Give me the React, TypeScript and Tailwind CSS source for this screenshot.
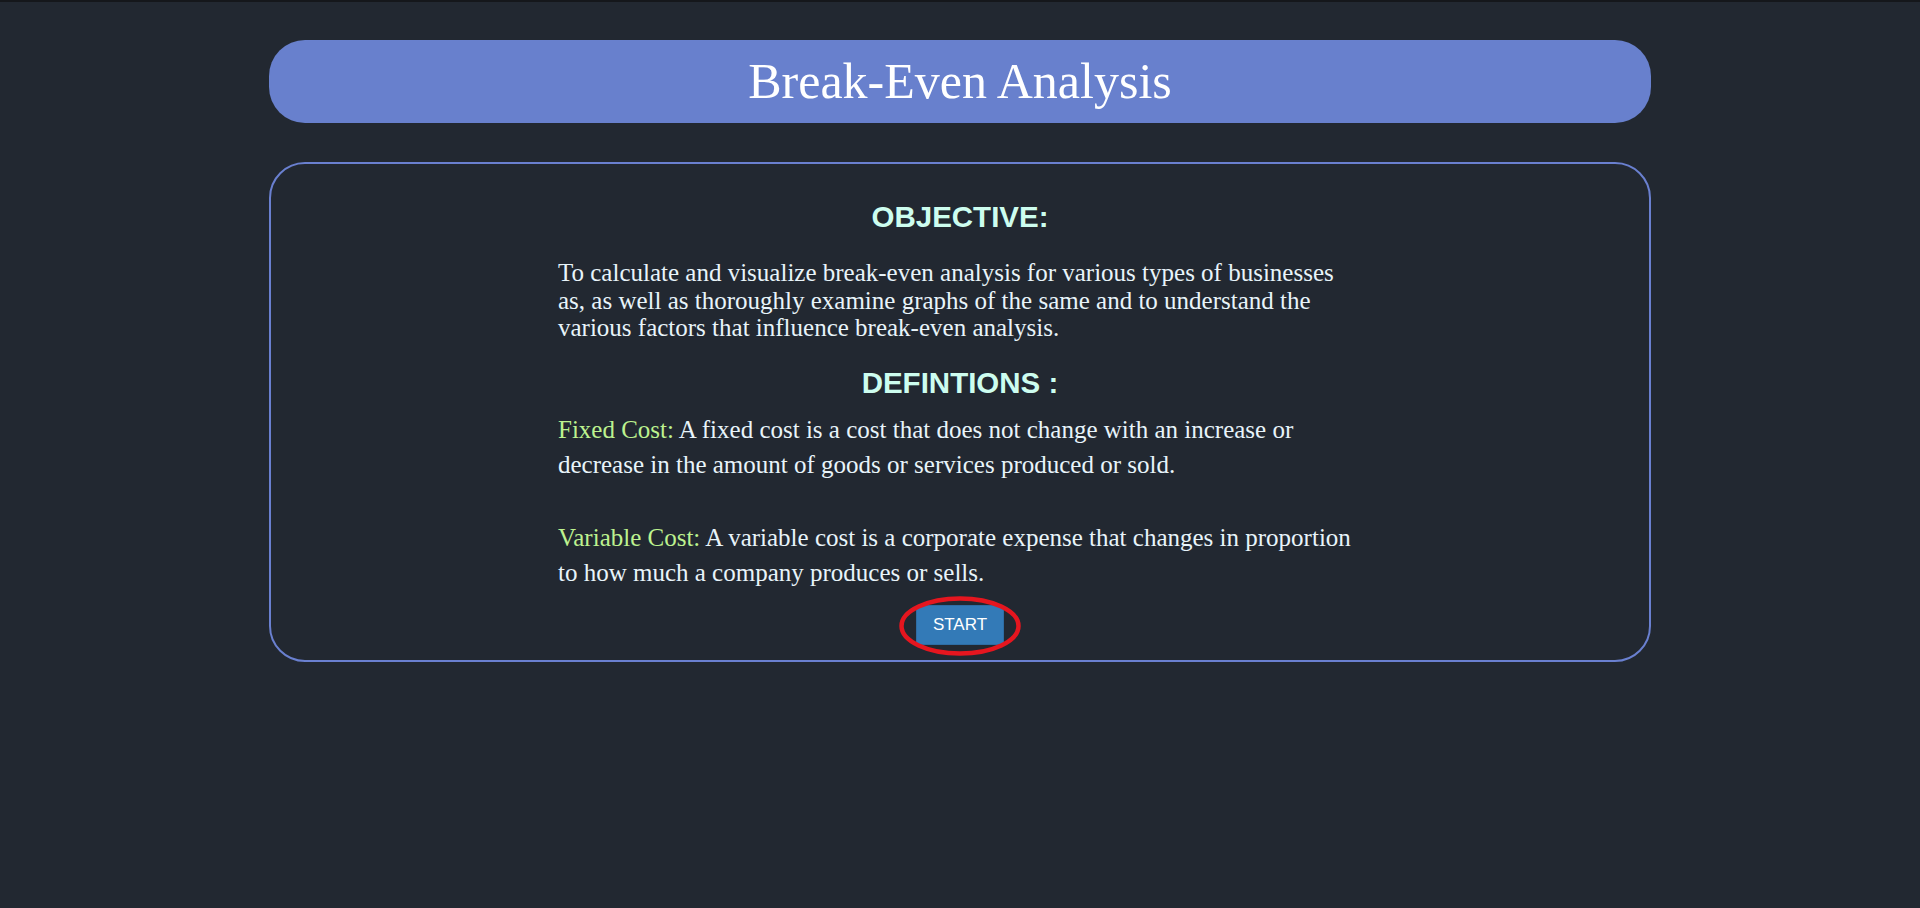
import React from 'react';

const serif = "font-['Liberation_Serif','Times_New_Roman',serif]";
const sans = "font-['Liberation_Sans',Arial,sans-serif]";

function Definition({ label, children }: { label: string; children: React.ReactNode }) {
  return (
    <p className={`${serif} text-[25px] leading-[35px] text-[#e8f4fa]`}>
      <span className="text-[#bdf28f]">{label}</span> {children}
    </p>
  );
}

export default function App() {
  return (
    <div className="min-h-screen bg-[#222831]">
      <div className="h-[2px] bg-[#15171b]" />

      <header className="mx-auto mt-[38px] flex h-[83px] w-[72%] items-center justify-center rounded-[36px] bg-[#6880cd]">
        <h1 className={`${serif} text-[50px] font-normal text-white`}>Break-Even Analysis</h1>
      </header>

      <main className="mx-auto mt-[39px] h-[500px] w-[72%] rounded-[36px] border-2 border-[#6a80d0]">
        <div className="mx-auto flex w-[804px] flex-col pt-[36px]">
          <h2 className={`${sans} text-center text-[29.5px] leading-[34px] font-bold text-[#cdfdef]`}>
            OBJECTIVE:
          </h2>
          <p className={`${serif} mt-[25px] text-[25px] leading-[27.5px] text-[#e8f4fa]`}>
            To calculate and visualize break-even analysis for various types of businesses as, as well as
            thoroughly examine graphs of the same and to understand the various factors that influence
            break-even analysis.
          </p>

          <h2 className={`${sans} mt-[24px] text-center text-[29.5px] leading-[34px] font-bold text-[#cdfdef]`}>
            DEFINTIONS :
          </h2>
          <div className="mt-[12px] flex flex-col gap-[38px]">
            <Definition label="Fixed Cost:">
              A fixed cost is a cost that does not change with an increase or decrease in the amount of goods
              or services produced or sold.
            </Definition>
            <Definition label="Variable Cost:">
              A variable cost is a corporate expense that changes in proportion to how much a company produces
              or sells.
            </Definition>
          </div>

          <div className="mt-[15px] flex justify-center">
            <div className="relative">
              <button
                className={`${sans} h-[40px] w-[88px] rounded-[2px] border border-[#2e6da4] bg-[#337ab7] text-[17px] text-white`}
              >
                START
              </button>
              <svg
                className="pointer-events-none absolute left-[-17px] top-[-9px]"
                width="122"
                height="60"
                viewBox="0 0 122 60"
              >
                <ellipse cx="61" cy="30" rx="58.5" ry="27.5" fill="none" stroke="#e5161f" strokeWidth="4.5" />
              </svg>
            </div>
          </div>
        </div>
      </main>
    </div>
  );
}
